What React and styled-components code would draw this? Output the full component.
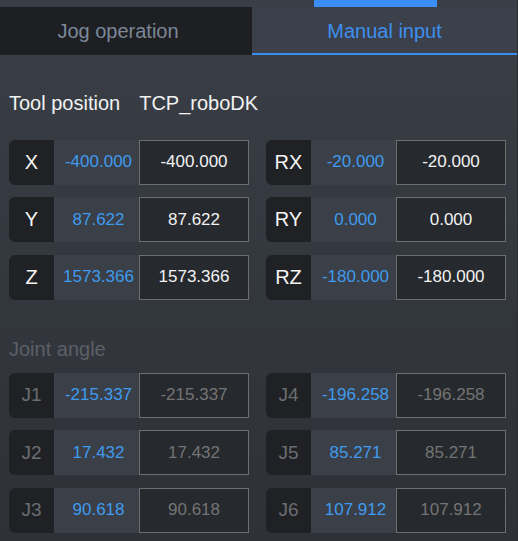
import React from "react";
import styled, { createGlobalStyle } from "styled-components";

const Global = createGlobalStyle`
  html, body { margin: 0; padding: 0; background: #2a2d32; }
  body { font-family: "Liberation Sans", Arial, sans-serif; }
  * { box-sizing: border-box; }
`;

const Panel = styled.div`
  width: 517px;
  height: 541px;
  background: linear-gradient(180deg, #3a3f47 0%, #34383f 45%, #2e3137 100%);
  overflow: hidden;
`;

const Strip = styled.div`
  height: 7px;
  display: flex;
`;

const StripMark = styled.div`
  margin-left: 314px;
  width: 123px;
  height: 7px;
  background: #3a8ef5;
`;

const Tabs = styled.div`
  display: flex;
  height: 48px;
`;

const Tab = styled.div`
  flex: ${(p) => (p.$active ? "1" : "0 0 252px")};
  display: flex;
  align-items: center;
  justify-content: center;
  font-size: 20px;
  padding-right: ${(p) => (p.$active ? "0" : "16px")};
  padding-top: ${(p) => (p.$active ? "2px" : "0")};
  color: ${(p) => (p.$active ? "#3d8ff0" : "#7c8899")};
  background: ${(p) => (p.$active ? "#3b404a" : "#1d1f22")};
  border-bottom: ${(p) => (p.$active ? "2px solid #3a8ef0" : "none")};
`;

const Content = styled.div`
  padding: 0 11px 0 9px;
`;

const Title = styled.div`
  display: flex;
  gap: 19px;
  font-size: 20px;
  line-height: 20px;
  color: ${(p) => (p.$dim ? "#5c6066" : "#f2f2f2")};
  margin-top: ${(p) => p.$top}px;
  margin-bottom: ${(p) => p.$bottom}px;
`;

const Grid = styled.div`
  display: grid;
  grid-template-columns: 240px 240px;
  column-gap: 17px;
  row-gap: 12.5px;
`;

const Row = styled.div`
  display: flex;
  height: 45px;
`;

const Label = styled.div`
  width: 45px;
  display: flex;
  align-items: center;
  justify-content: center;
  background: #1f2124;
  border-radius: 6px 0 0 6px;
  font-size: ${(p) => (p.$dim ? "19px" : "20px")};
  color: ${(p) => (p.$dim ? "#6a6d72" : "#f4f4f4")};
`;

const Value = styled.div`
  width: 85px;
  display: flex;
  align-items: center;
  justify-content: center;
  padding-left: 4px;
  background: #3a3f48;
  font-size: 17px;
  color: #3f9bed;
`;

const Input = styled.div`
  width: 110px;
  display: flex;
  align-items: center;
  justify-content: center;
  background: #26292d;
  border: 1px solid #6e6e6e;
  font-size: 17px;
  color: ${(p) => (p.$dim ? "#747474" : "#f2f2f2")};
`;

const tool = [
  ["X", "-400.000"],
  ["RX", "-20.000"],
  ["Y", "87.622"],
  ["RY", "0.000"],
  ["Z", "1573.366"],
  ["RZ", "-180.000"],
];

const joints = [
  ["J1", "-215.337"],
  ["J4", "-196.258"],
  ["J2", "17.432"],
  ["J5", "85.271"],
  ["J3", "90.618"],
  ["J6", "107.912"],
];

function Field({ name, value, dim }) {
  return (
    <Row>
      <Label $dim={dim}>{name}</Label>
      <Value>{value}</Value>
      <Input $dim={dim}>{value}</Input>
    </Row>
  );
}

export default function App() {
  return (
    <>
      <Global />
      <Panel>
        <Strip>
          <StripMark />
        </Strip>
        <Tabs>
          <Tab>Jog operation</Tab>
          <Tab $active>Manual input</Tab>
        </Tabs>
        <Content>
          <Title $top={38.4} $bottom={26.6}>
            <span>Tool position</span>
            <span>TCP_roboDK</span>
          </Title>
          <Grid>
            {tool.map(([n, v]) => (
              <Field key={n} name={n} value={v} />
            ))}
          </Grid>
          <Title $dim $top={39.4} $bottom={13.6}>
            <span>Joint angle</span>
          </Title>
          <Grid>
            {joints.map(([n, v]) => (
              <Field key={n} name={n} value={v} dim />
            ))}
          </Grid>
        </Content>
      </Panel>
    </>
  );
}
